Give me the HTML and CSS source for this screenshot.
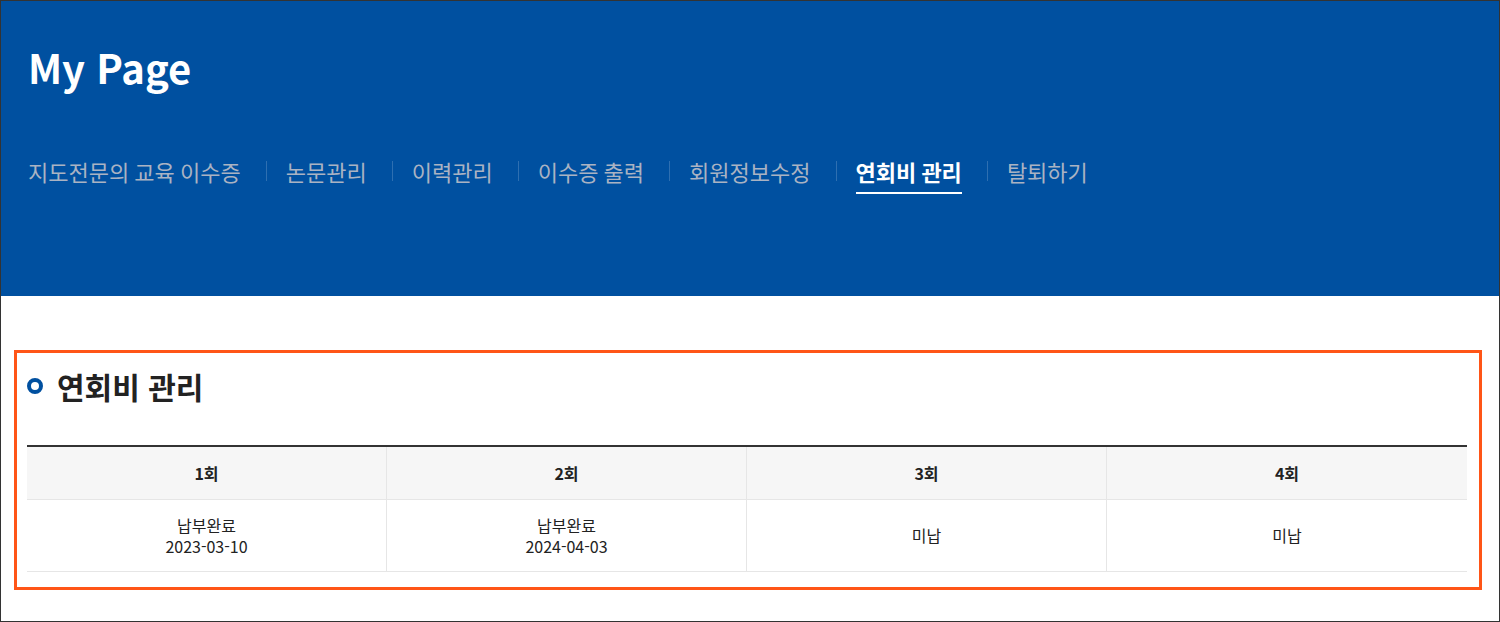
FILE: index.html
```html
<!DOCTYPE html>
<html lang="ko">
<head>
<meta charset="utf-8">
<title>My Page</title>
<link rel="stylesheet" href="styles.css">
</head>
<body>
<div class="page">
  <header class="hero">
    <h1 class="hero-title">My Page</h1>
    <nav>
      <ul class="tabs">
        <li class="tab"><span class="tab-label">지도전문의 교육 이수증</span></li>
        <li class="tab"><span class="tab-label">논문관리</span></li>
        <li class="tab"><span class="tab-label">이력관리</span></li>
        <li class="tab"><span class="tab-label">이수증 출력</span></li>
        <li class="tab"><span class="tab-label">회원정보수정</span></li>
        <li class="tab active"><span class="tab-label">연회비 관리</span></li>
        <li class="tab"><span class="tab-label">탈퇴하기</span></li>
      </ul>
    </nav>
  </header>
  <section class="fee-section">
    <h2 class="section-title"><span class="ring"></span>연회비 관리</h2>
    <div class="fee-table">
      <div class="th">1회</div>
      <div class="th">2회</div>
      <div class="th">3회</div>
      <div class="th">4회</div>
      <div class="td">납부완료<br>2023-03-10</div>
      <div class="td">납부완료<br>2024-04-03</div>
      <div class="td">미납</div>
      <div class="td">미납</div>
    </div>
  </section>
</div>
</body>
</html>
```

FILE: styles.css
```css
* { box-sizing: border-box; }
html, body { margin: 0; padding: 0; background: #fff; }
body { font-family: "Noto Sans CJK KR", "Noto Sans", sans-serif; color: #222; }

.page {
  width: 1500px;
  height: 622px;
  border: 1px solid #333;
  overflow: hidden;
}

.hero {
  height: 295px;
  background: #0050a0;
  padding: 46px 0 0 27px;
}
.hero-title {
  margin: 0;
  font-size: 40px;
  line-height: 40px;
  font-weight: 700;
  color: #fff;
}

.tabs {
  list-style: none;
  margin: 73px 0 0;
  padding: 0;
  display: flex;
  align-items: flex-start;
}
.tab {
  display: flex;
  align-items: flex-start;
  font-size: 22px;
  line-height: 22px;
  word-spacing: -1px;
  color: #aab3c3;
}
.tab + .tab::before {
  content: "";
  width: 1px;
  height: 20px;
  background: rgba(255, 255, 255, 0.18);
  margin: 1px 19px 0 25px;
}
.tab-label {
  display: inline-block;
  padding-bottom: 10px;
  border-bottom: 2px solid transparent;
}
.tab.active .tab-label {
  color: #fff;
  font-weight: 700;
  border-bottom-color: #fff;
}

.fee-section {
  width: 1468px;
  margin: 54px 0 0 13px;
  border: 3px solid #ff5517;
  padding: 15px 12px 15px 10px;
}
.section-title {
  margin: 0 0 41px;
  display: flex;
  align-items: center;
  font-size: 30px;
  line-height: 36px;
  font-weight: 700;
  color: #222;
}
.ring {
  width: 16px;
  height: 16px;
  border: 4px solid #0050a0;
  border-radius: 50%;
  margin-right: 14px;
}

.fee-table {
  display: grid;
  grid-template-columns: repeat(4, 1fr);
  border-top: 2px solid #333;
}
.th, .td {
  display: flex;
  align-items: center;
  justify-content: center;
  text-align: center;
  border-bottom: 1px solid #e6e6e6;
}
.th:not(:nth-child(4n)), .td:not(:nth-child(4n)) {
  border-right: 1px solid #e6e6e6;
}
.th {
  height: 53px;
  background: #f6f6f6;
  font-size: 16px;
  font-weight: 700;
  color: #222;
}
.td {
  height: 72px;
  font-size: 16px;
  line-height: 21px;
  color: #222;
}
```
